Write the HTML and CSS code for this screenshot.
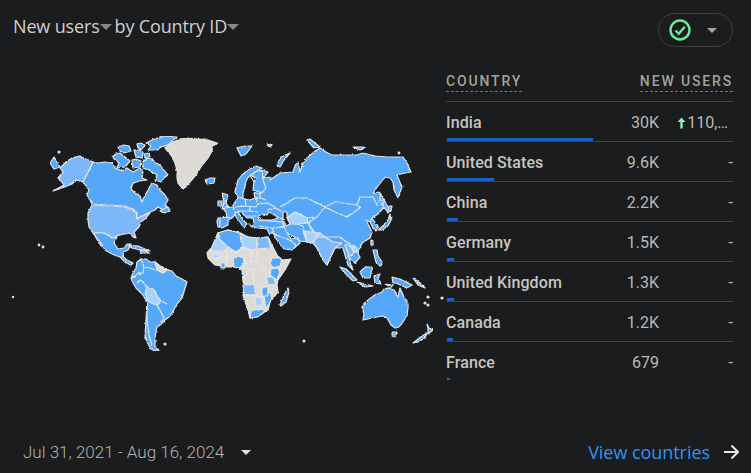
FILE: index.html
```html
<!doctype html>
<html>
<head>
    <meta charset="utf-8">
    <link rel="stylesheet" href="styles.css">
</head>
<body>
<div class="card">
    <div class="card-head">
        <div class="title">
            <span>New users</span><span class="title-caret"></span>
            <span class="title-by">by Country ID</span><span class="title-caret"></span>
        </div>
        <div class="status-pill">
            <svg class="status-check" width="22" height="22" viewBox="0 0 22 22">
                <circle cx="11" cy="11" r="9.5"></circle>
                <path d="M6.5 11.5 L9.8 14.8 L15.8 7.8"></path>
            </svg>
            <span class="pill-caret"></span>
        </div>
    </div>

    <div class="card-main">
        <svg class="world" viewBox="0 60 446 370" width="446" height="370">
            <defs>
                <filter id="rough" x="0" y="0" width="100%" height="100%" filterUnits="objectBoundingBox">
                    <feTurbulence type="fractalNoise" baseFrequency="0.35" numOctaves="2" seed="4"></feTurbulence>
                    <feDisplacementMap in="SourceGraphic" scale="2.4" xChannelSelector="R" yChannelSelector="G"></feDisplacementMap>
                </filter>
            </defs>
            <g class="world-land">
            <!-- canada -->
            <g class="c-blue">
                <path d="M93 162 L98 163 L105 162 L112 163 L115 168 L122 171 L127 168 L133 172 L140 168 L143 172 L142 178 L147 180 L140 181 L133 183 L131 189 L135 193 L140 196 L142 202 L144 197 L148 190 L152 183 L157 185 L160 190 L165 195 L168 200 L165 205 L170 209 L163 210 L158 207 L155 210 L148 213 L140 217 L136 218 L137 213 L133 209 L125 206 L92 204 L90 200 L87 195 L89 190 L83 182Z"></path>
                <path d="M146 143 L152 140 L163 136 L177 137 L172 141 L168 145 L161 147 L157 150 L148 150 L151 146Z"></path>
                <path d="M143 162 L147 158 L152 159 L156 163 L160 165 L164 170 L168 175 L164 178 L161 182 L155 180 L157 175 L152 172 L149 170 L143 168Z"></path>
                <path d="M112 157 L116 154 L120 153 L125 157 L130 161 L125 167 L117 168 L119 163Z"></path>
                <path d="M118 147 L124 145 L129 146 L131 151 L124 153 L120 151Z"></path>
                <path d="M134 150 L139 150 L143 152 L142 158 L136 157Z"></path>
                <path d="M132 160 L136 159 L141 161 L140 167 L133 168Z"></path>
                <path d="M137 144 L141 143 L145 145 L142 149 L138 148Z"></path>
                <path d="M144 154 L149 153 L150 157 L145 158Z"></path>
                <path d="M160 211 L167 207 L170 211 L164 213Z"></path>
                <path d="M50 163 L54 157 L56 161 L60 167 L54 169Z"></path>
            </g>
            <!-- usa and alaska -->
            <path class="c-mid" d="M93 162 L83 182 L76 180 L72 184 L62 188 L53 191 L64 185 L60 180 L58 178 L63 172 L60 168 L66 162 L72 158 L79 156Z"></path>
            <path class="c-mid" d="M92 205 L125 207 L133 210 L137 214 L136 218 L141 217 L150 213 L146 218 L141 222 L139 227 L134 232 L136 238 L133 237 L130 233 L120 235 L112 238 L108 235 L103 233 L93 233 L89 227 L88 220 L88 213Z"></path>
            <!-- mexico, central america, caribbean -->
            <g class="c-blue">
                <path d="M93 233 L103 233 L108 235 L112 238 L117 237 L114 243 L118 249 L124 248 L127 244 L131 244 L128 250 L124 252 L122 256 L127 260 L133 263 L131 265 L126 263 L120 257 L112 254 L105 250 L101 243 L97 238Z"></path>
                <path d="M94 234 L99 243 L102 246 L98 241Z"></path>
                <path d="M128 245 L138 246 L145 249 L150 251 L140 250 L132 248Z"></path>
                <path d="M140 250 L146 251 L149 253 L141 253Z"></path>
            </g>
            <!-- south america -->
            <path class="c-blue" d="M137 262 L141 259 L146 259 L150 262 L155 262 L160 266 L167 270 L172 271 L176 276 L182 279 L187 282 L185 288 L184 292 L182 298 L177 304 L172 313 L169 317 L165 320 L160 325 L157 327 L156 331 L155 338 L155 347 L159 351 L155 351 L151 349 L147 342 L145 337 L146 320 L147 303 L143 295 L136 288 L132 281 L131 278 L133 273 L136 268Z"></path>
            <path class="c-grey" d="M155 262 L160 266 L167 270 L163 273 L157 270Z"></path>
            <path class="c-pale" d="M147 287 L153 289 L158 297 L161 301 L157 305 L151 303 L147 299 L145 293Z"></path>
            <path class="c-line" d="M132 278 L137 274 L143 273 L144 267 L141 259 M144 267 L150 268 L155 270 M137 283 L140 280 L143 282 L147 287 M147 303 L147 320 L149 335 L152 346 M157 305 L161 312 L164 318 L160 325 M161 301 L167 304 M131 278 L136 277"></path>

            <!-- greenland and the north -->
            <path class="c-grey" d="M165 148 L173 142 L180 139 L187 138 L198 139 L205 139 L217 143 L212 147 L212 151 L208 158 L203 164 L199 170 L195 176 L190 182 L183 189 L178 183 L177 178 L177 170 L175 163 L171 155Z"></path>
            <g class="c-blue">
                <path d="M205 180 L210 178 L215 178 L214 183 L207 184Z"></path>
                <path d="M237 148 L245 146 L252 146 L246 154 L241 156Z"></path>
                <path d="M267 145 L272 144 L271 147Z"></path>
                <path d="M277 165 L281 157 L290 153 L284 160 L280 167Z"></path>
                <path d="M307 140 L310 139 L315 143 L320 147 L314 148Z"></path>
                <path d="M353 147 L366 147 L360 150Z"></path>
            </g>

            <!-- eurasia -->
            <path class="c-blue" d="M218 227 L217 222 L218 218 L227 217 L226 212 L224 208 L232 207 L235 202 L238 198 L238 194 L242 195 L243 199 L250 200 L255 198 L254 193 L262 193 L253 190 L254 182 L256 178 L252 176 L255 172 L262 170 L268 172 L263 178 L270 177 L270 180 L280 173 L293 172 L295 166 L298 162 L300 172 L303 163 L307 158 L314 152 L320 148 L326 152 L332 155 L345 155 L357 155 L363 153 L375 156 L387 157 L396 157 L403 157 L407 163 L411 172 L405 173 L397 175 L399 180 L402 187 L398 198 L394 190 L393 182 L390 178 L385 177 L378 186 L373 193 L379 192 L383 197 L386 204 L390 210 L388 213 L384 207 L378 214 L372 218 L375 222 L378 226 L376 231 L373 228 L370 222 L366 220 L368 224 L372 232 L370 238 L362 243 L360 248 L357 252 L360 257 L355 263 L351 260 L348 255 L351 265 L353 270 L348 265 L345 255 L343 248 L337 248 L335 248 L331 256 L327 265 L323 260 L317 248 L313 243 L307 242 L300 241 L293 236 L287 233 L291 239 L298 238 L300 243 L292 250 L284 249 L277 240 L272 232 L270 235 L267 229 L258 228 L251 226 L249 224 L252 227 L254 222 L253 218 L247 218 L241 212 L237 212 L232 218 L228 220 L228 225 L222 228Z"></path>
            <path class="c-deep" d="M235 213 L238 212 L240 215 L243 220 L247 224 L244 228 L240 222 L236 217Z"></path>
            <path class="c-blue" d="M235 192 L238 180 L242 175 L248 170 L256 166 L262 168 L255 172 L250 175 L246 181 L245 187 L243 193 L243 199 L238 197Z"></path>
            <path class="c-blue" d="M222 193 L228 195 L226 203 L229 207 L222 209 L224 202Z"></path>
            <path class="c-blue" d="M218 201 L222 201 L222 206 L218 206Z"></path>
            <!-- seas -->
            <path class="c-sea" d="M258 216 L263 214 L267 215 L269 212 L275 215 L278 218 L272 220 L265 220 L259 220Z"></path>
            <path class="c-pale" d="M287 218 L295 212 L307 218 L308 223 L297 224 L291 224Z"></path>
            <path class="c-sea" d="M283 212 L287 212 L287 218 L290 224 L286 226 L283 220Z"></path>
            <path class="c-mid" d="M313 243 L320 233 L326 238 L333 242 L342 243 L335 248 L331 256 L327 265 L323 260 L317 248Z"></path>
            <path class="c-pale" d="M303 231 L313 232 L320 233 L313 243 L307 242Z"></path>
            <path class="c-mid" d="M345 245 L350 245 L354 252 L351 256 L348 253Z"></path>
            <path class="c-pale" d="M351 246 L357 248 L357 252 L354 252Z"></path>
            <path class="c-line" d="M280 207 L295 198 L307 198 L325 207 L335 202 L357 205 L360 197 L373 197 L378 207 M357 205 L360 208 L347 217 L335 212 L325 207 L317 217 L307 218 L295 212 L287 218 M317 217 L308 223 L318 237 L340 237 L348 243 L357 247 M308 223 L313 232 M303 226 L307 242 M303 226 L297 224 M284 226 L287 233 M258 220 L270 221 L282 222 L284 227 L272 228 L259 226 M275 235 L290 240 L296 246 M272 228 L275 235 M284 226 L276 228 M226 217 L232 218 M220 219 L220 227 M233 207 L236 213 M245 198 L246 206 M256 197 L258 204 L268 203 L276 208 L267 210 M235 207 L246 206 L256 207 L258 204 M238 211 L250 211 L258 212 M247 216 L256 216 M250 206 L250 211 M260 193 L260 198 L266 200 M255 198 L260 198 M262 170 L263 180 L266 188 L262 193 M250 175 L254 182 M372 218 L370 222 M282 212 L276 208 M280 218 L285 220"></path>
            <!-- east asia islands -->
            <g class="c-blue">
                <path d="M340 267 L346 269 L350 273 L357 280 L353 281 L347 275 L343 271Z"></path>
                <path d="M357 282 L365 284 L373 286 L365 287Z"></path>
                <path d="M360 272 L365 267 L372 267 L371 273 L370 278 L363 278Z"></path>
                <path d="M374 276 L380 274 L378 279 L381 284 L375 283Z"></path>
                <path d="M373 250 L377 250 L378 256 L382 262 L381 267 L376 262Z"></path>
                <path d="M378 230 L384 225 L388 220 L390 214 L391 220 L388 226 L382 230Z"></path>
                <path d="M389 206 L392 206 L391 211 L388 210Z"></path>
                <path d="M380 193 L383 198 L383 206 L380 202Z"></path>
                <path d="M371 240 L373 241 L373 245 L371 245Z"></path>
                <path d="M392 277 L400 279 L412 285 L407 288 L396 283 L393 283Z"></path>
                <path d="M413 278 L419 282 L425 288 L418 285Z"></path>
                <path d="M385 284 L393 285 L391 287Z"></path>
            </g>

            <!-- africa -->
            <path class="c-grey" d="M212 247 L215 240 L218 233 L228 230 L240 233 L248 237 L257 238 L268 237 L272 245 L277 255 L282 260 L291 259 L285 270 L278 280 L277 285 L278 292 L270 302 L268 310 L263 313 L257 317 L250 318 L248 310 L243 295 L247 287 L243 282 L242 270 L235 267 L227 267 L215 265 L208 258 L207 253Z"></path>
            <path class="c-blue" d="M218 233 L228 230 L240 233 L241 240 L243 247 L236 252 L228 247 L220 240Z"></path>
            <path class="c-pale" d="M212 247 L215 240 L218 233 L220 240 L228 247 L224 251 L210 251Z"></path>
            <path class="c-pale" d="M240 233 L248 237 L257 238 L257 249 L252 250 L243 247 L241 240Z"></path>
            <path class="c-mid" d="M257 238 L268 237 L271 248 L257 249Z"></path>
            <path class="c-blue" d="M233 258 L243 257 L245 262 L240 268 L234 267Z"></path>
            <path class="c-blue" d="M272 258 L280 258 L282 260 L280 266 L274 268 L270 264Z"></path>
            <path class="c-blue" d="M271 269 L278 268 L280 272 L277 279 L270 276Z"></path>
            <path class="c-mid" d="M266 277 L273 277 L276 284 L268 285Z"></path>
            <path class="c-mid" d="M243 285 L254 284 L256 295 L244 295Z"></path>
            <path class="c-pale" d="M254 298 L262 297 L262 306 L256 306Z"></path>
            <path class="c-blue" d="M250 318 L251 311 L258 309 L265 310 L263 313 L257 317Z"></path>
            <path class="c-blue" d="M264 296 L270 292 L272 298 L266 309Z"></path>
            <path class="c-blue" d="M262 288 L268 286 L268 296 L262 296Z"></path>
            <path class="c-blue" d="M221 263 L225 263 L225 268 L221 268Z"></path>
            <path class="c-pale" d="M243 272 L247 272 L246 276 L243 276Z"></path>
            <path class="c-pale" d="M213 255 L218 253 L220 258 L214 259Z"></path>
            <path class="c-line" d="M224 251 L237 253 L243 247 M257 249 L257 262 L245 262 M243 268 L253 270 L268 270 M253 270 L254 284 L262 288 M227 252 L227 266 M215 258 L224 256 L233 258 M252 250 L250 262 M257 262 L266 270 M244 295 L256 295 L262 297"></path>
            <path class="c-blue" d="M280 305 L284 295 L288 288 L289 292 L286 302 L281 306Z"></path>

            <!-- oceania -->
            <g class="c-blue">
                <path d="M362 307 L368 300 L375 295 L382 292 L384 289 L388 288 L394 290 L398 297 L400 288 L404 297 L408 304 L408 308 L407 315 L403 322 L399 327 L395 328 L391 325 L387 318 L383 316 L377 317 L363 320 L364 314Z"></path>
                <path d="M392 332 L397 332 L395 337 L392 336Z"></path>
                <path d="M413 343 L422 336 L427 333 L425 338 L418 342Z"></path>
                <path d="M427 324 L429 328 L433 330 L428 334 L428 328Z"></path>
            </g>
            </g>

            <!-- small islands -->
            <g class="c-spot">
                <circle cx="13" cy="297" r="0.6"></circle>
                <circle cx="39" cy="245" r="0.8"></circle>
                <circle cx="43" cy="247" r="0.8"></circle>
                <circle cx="304" cy="341" r="1"></circle>
                <circle cx="428" cy="297" r="1"></circle>
                <circle cx="425" cy="303" r="1"></circle>
                <circle cx="442" cy="298" r="1"></circle>
                <circle cx="428" cy="305" r="1"></circle>
                <circle cx="399" cy="153" r="0.8"></circle>
                <circle cx="59" cy="152" r="1"></circle>
                <circle cx="165" cy="344" r="1"></circle>
            </g>
        </svg>

        <div class="table">
            <div class="table-head">
                <span class="th">COUNTRY</span>
                <span class="th">NEW USERS</span>
            </div>
            <div class="row">
                <div class="cells"><span class="name">India</span><span class="value">30K</span>
                    <span class="delta delta-up">
                        <svg width="9" height="12" viewBox="0 0 9 12"><path d="M4.5 0.5 L8.5 5 H5.7 V11.5 H3.3 V5 H0.5Z"></path></svg>110,…
                    </span>
                </div>
                <div class="bar" style="width: 146px"></div>
            </div>
            <div class="row">
                <div class="cells"><span class="name">United States</span><span class="value">9.6K</span><span class="delta">-</span></div>
                <div class="bar" style="width: 47px"></div>
            </div>
            <div class="row">
                <div class="cells"><span class="name">China</span><span class="value">2.2K</span><span class="delta">-</span></div>
                <div class="bar" style="width: 11px"></div>
            </div>
            <div class="row">
                <div class="cells"><span class="name">Germany</span><span class="value">1.5K</span><span class="delta">-</span></div>
                <div class="bar" style="width: 7px"></div>
            </div>
            <div class="row">
                <div class="cells"><span class="name">United Kingdom</span><span class="value">1.3K</span><span class="delta">-</span></div>
                <div class="bar" style="width: 7px"></div>
            </div>
            <div class="row">
                <div class="cells"><span class="name">Canada</span><span class="value">1.2K</span><span class="delta">-</span></div>
                <div class="bar" style="width: 6px"></div>
            </div>
            <div class="row row-last">
                <div class="cells"><span class="name">France</span><span class="value">679</span><span class="delta">-</span></div>
                <div class="bar bar-thin" style="width: 3px"></div>
            </div>
        </div>
    </div>

    <div class="card-foot">
        <div class="date">Jul 31, 2021 - Aug 16, 2024<span class="date-caret"></span></div>
        <div class="link">
            <span>View countries</span>
            <svg width="16" height="16" viewBox="0 0 16 16"><path d="M1 8 H14.5 M8.5 1.5 L15 8 L8.5 14.5"></path></svg>
        </div>
    </div>
</div>
</body>
</html>
```

FILE: styles.css
```css
html,
body {
    width: 100%;
    height: 100%;
    padding: 0;
    margin: 0;
    background: #1a1c1e;
    overflow: hidden;
}

.card {
    display: flex;
    flex-direction: column;
    width: 751px;
    height: 473px;
    font-family: "Roboto", sans-serif;
}

/* top bar */

.card-head {
    display: flex;
    justify-content: space-between;
    align-items: flex-start;
    box-sizing: border-box;
    height: 60px;
    padding: 13px 18px 0 13px;
}

.title {
    display: flex;
    align-items: center;
    height: 25px;
    font-family: "Open Sans", sans-serif;
    font-size: 18px;
    color: #d2cfca;
    letter-spacing: -0.15px;
}

.title-by {
    margin-left: 3px;
}

.title-caret {
    width: 0;
    height: 0;
    margin-top: 2px;
    border-left: 6px solid transparent;
    border-right: 6px solid transparent;
    border-top: 6px solid #8a8884;
}

.status-pill {
    display: flex;
    align-items: center;
    box-sizing: border-box;
    width: 75px;
    height: 34px;
    padding-left: 10px;
    border: 1px solid #3c3e40;
    border-radius: 17px;
}

.status-check {
    fill: none;
    stroke: #6fe89c;
    stroke-width: 2.4;
}

.pill-caret {
    width: 0;
    height: 0;
    margin-left: 16px;
    border-left: 5.5px solid transparent;
    border-right: 5.5px solid transparent;
    border-top: 5.5px solid #aaa59c;
}

/* map and table */

.card-main {
    display: flex;
    flex: 1;
}

.world {
    flex: none;
    stroke: #e6e6e4;
    stroke-width: 1.2;
    stroke-linejoin: round;
}

.world-land {
    filter: url(#rough);
}

.c-blue {
    fill: #55a8f9;
}

.c-deep {
    fill: #3f9bf5;
}

.c-mid {
    fill: #7db9fa;
}

.c-pale {
    fill: #a6d2fc;
}

.c-grey {
    fill: #dedbd6;
}

.c-sea {
    fill: #1a1c1e;
}

.c-line {
    fill: none;
}

.c-spot {
    fill: #e6e6e4;
}

.table {
    width: 287px;
}

.table-head {
    display: flex;
    justify-content: space-between;
    align-items: flex-start;
    box-sizing: border-box;
    height: 42px;
    padding-top: 13px;
    border-bottom: 1px solid #3f4143;
}

.th {
    padding-bottom: 2px;
    border-bottom: 1px dashed #77757a;
    font-size: 14px;
    font-weight: 500;
    line-height: 16px;
    letter-spacing: 1.85px;
    color: #a5a199;
}

.row {
    box-sizing: border-box;
    height: 40px;
    border-bottom: 1px solid #3f4143;
}

.row-last {
    border-bottom: none;
}

.cells {
    display: flex;
    align-items: center;
    box-sizing: border-box;
    height: 36px;
    padding-top: 5px;
    font-size: 16px;
    line-height: 20px;
}

.name {
    flex: 1;
    font-weight: 500;
    letter-spacing: 0.1px;
    color: #c8c5c0;
}

.value {
    color: #bcb9b4;
}

.delta {
    display: flex;
    align-items: center;
    justify-content: flex-end;
    width: 74px;
    color: #bcb9b4;
}

.delta-up {
    box-sizing: border-box;
    padding-right: 5px;
}

.delta-up svg {
    margin-right: 1px;
    fill: #86f0ac;
}

.bar {
    height: 3px;
    margin-left: 1px;
    background: #1a63c4;
}

.bar-thin {
    height: 2px;
}

/* bottom */

.card-foot {
    display: flex;
    justify-content: space-between;
    align-items: center;
    box-sizing: border-box;
    height: 43px;
    padding: 0 12px 0 23px;
}

.date {
    display: flex;
    align-items: center;
    font-size: 17px;
    font-weight: 300;
    color: #b5b2ac;
}

.date-caret {
    width: 0;
    height: 0;
    margin: 2px 0 0 17px;
    border-left: 5px solid transparent;
    border-right: 5px solid transparent;
    border-top: 5px solid #e4e2de;
}

.link {
    display: flex;
    align-items: center;
    gap: 13px;
    font-family: "Open Sans", sans-serif;
    font-size: 18px;
    letter-spacing: -0.05px;
    color: #2f94f0;
}

.link svg {
    fill: none;
    stroke: #e8e6e2;
    stroke-width: 2;
}
```
